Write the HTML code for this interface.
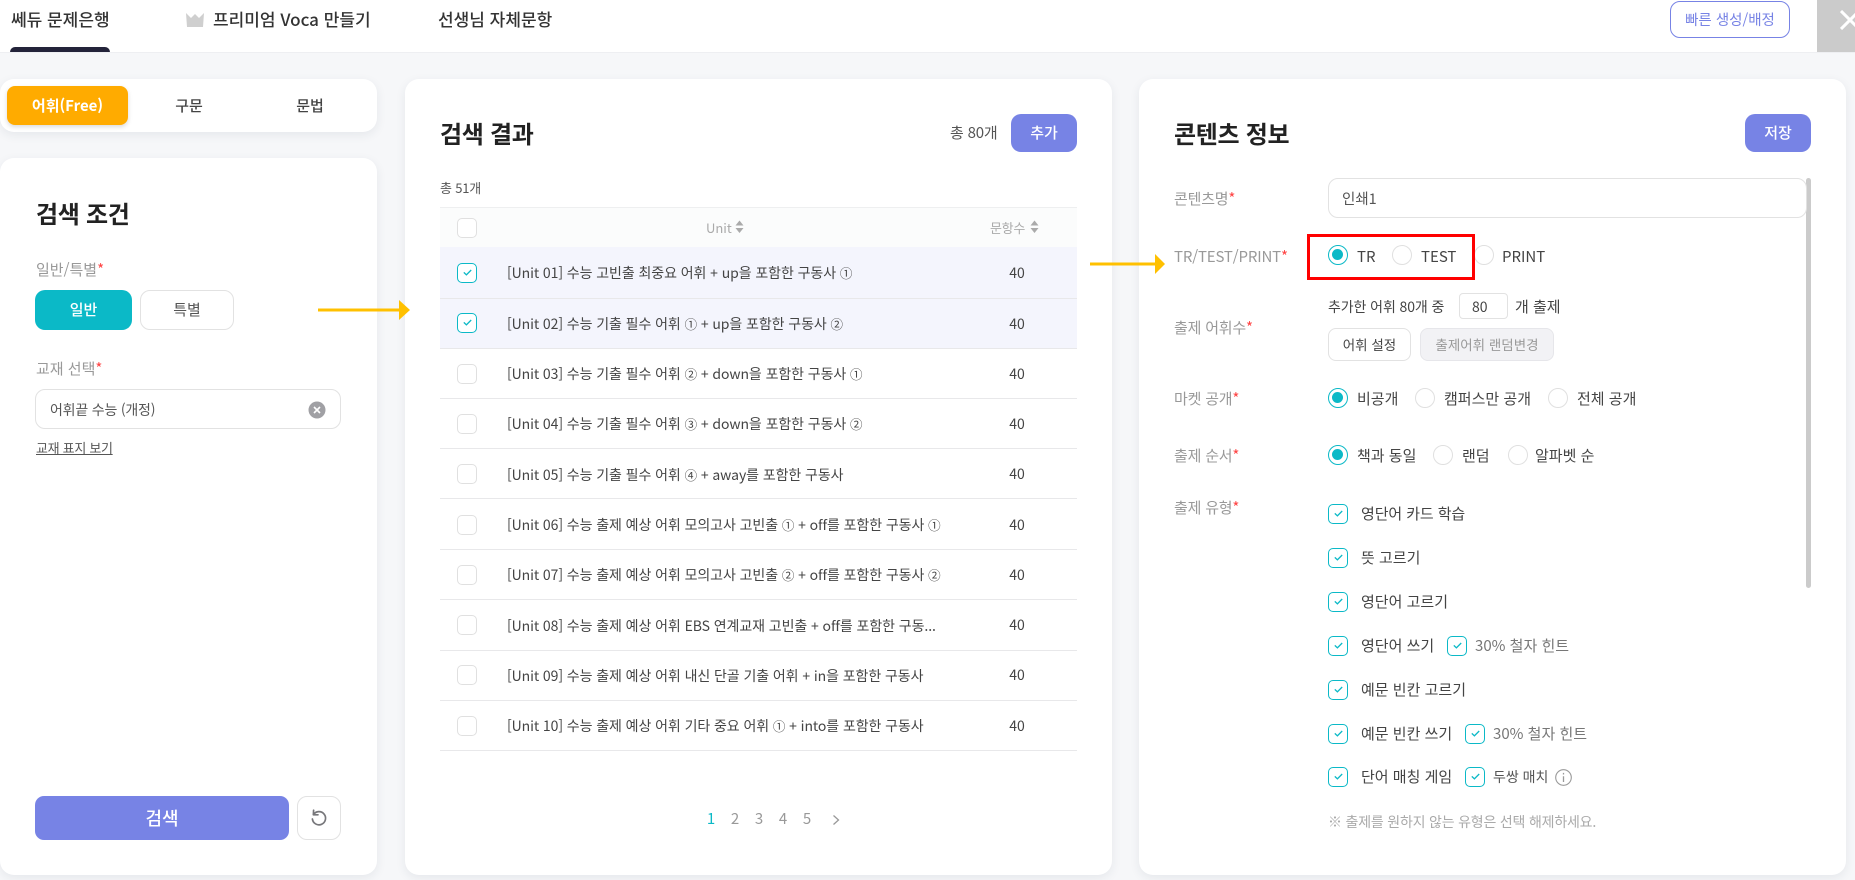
<!DOCTYPE html>
<html lang="ko">
<head>
<meta charset="utf-8">
<title>쎄듀 문제은행</title>
<style>
html,body{margin:0;padding:0;width:1855px;height:880px;overflow:hidden;background:#f6f7f9}
body{position:relative;color:#333;font-size:15px}
body,body *{font-family:"Noto Sans CJK KR","Liberation Sans",sans-serif}
.a{position:absolute;white-space:nowrap}
.t{position:absolute;white-space:nowrap;line-height:20px;height:20px}
.card{position:absolute;background:#fff;border-radius:14px;box-shadow:0 3px 10px rgba(40,50,80,.08)}
.h{font-size:24px;font-weight:700;color:#222;line-height:30px;height:30px;position:absolute;white-space:nowrap;letter-spacing:-.3px}
.lb{color:#999;font-size:15px}
.lb i{color:#f44;font-style:normal}
.btn{position:absolute;box-sizing:border-box;border-radius:10px;text-align:center;white-space:nowrap}
.pri{background:#7783e5;color:#fff;font-weight:500;font-size:15px}
.cb{position:absolute;box-sizing:border-box;width:20px;height:20px;border:1px solid #e0e0e0;border-radius:5px;background:#fff}
.cb.on{border:1.5px solid #0bb9c7}
.cb.on svg{position:absolute;left:4.5px;top:5px}
.rd{position:absolute;box-sizing:border-box;width:20px;height:20px;border:1px solid #e0e0e0;border-radius:50%;background:#fff}
.rd.on{border:1.5px solid #0bb9c7}
.rd.on:after{content:"";position:absolute;left:3px;top:3px;width:11px;height:11px;border-radius:50%;background:#0bb9c7}
.rowb{position:absolute;left:440px;width:637px;height:1px;background:#e8e8ea}
.row{position:absolute;left:507px;font-size:14px;line-height:20px;color:#444;white-space:nowrap;letter-spacing:-.08px}
.row span{font-size:12.5px}
.num{position:absolute;left:997px;width:40px;text-align:center;font-size:14px;line-height:20px;color:#444}
.pg{position:absolute;top:809px;line-height:20px;font-size:15px;color:#999;width:16px;text-align:center}
</style>
</head>
<body>

<!-- header -->
<div class="a" style="left:0;top:0;width:1855px;height:52px;background:#fff;border-bottom:1px solid #eeeff2"></div>
<div class="t" style="left:11px;top:9px;font-size:17px;font-weight:500;color:#333">쎄듀 문제은행</div>
<div class="a" style="left:10px;top:47px;width:100px;height:5px;background:#23233a;border-radius:5px 5px 0 0"></div>
<svg class="a" style="left:186px;top:13px" width="18" height="14" viewBox="0 0 18 14"><path d="M0 0 L5 5 L9 1 L13 5 L18 0 L17 14 L1 14 Z" fill="#cfcfcf"/></svg>
<div class="t" style="left:213px;top:9px;font-size:17px;font-weight:500;color:#333">프리미엄 Voca 만들기</div>
<div class="t" style="left:438px;top:9px;font-size:17px;font-weight:500;color:#333">선생님 자체문항</div>
<div class="btn" style="left:1670px;top:1px;width:120px;height:37px;border:1px solid #7783e5;background:#fff;color:#7783e5;font-size:14.5px;line-height:35px">빠른 생성/배정</div>
<div class="a" style="left:1817px;top:0;width:38px;height:52px;background:#cbcbcb;overflow:hidden">
<svg style="position:absolute;left:23px;top:10px" width="20" height="20" viewBox="0 0 20 20"><path d="M1 1 L19 19 M19 1 L1 19" stroke="#fff" stroke-width="3" fill="none"/></svg>
</div>

<!-- tabs card -->
<div class="card" style="left:0;top:79px;width:377px;height:53px"></div>
<div class="btn" style="left:7px;top:86px;width:121px;height:39px;background:#ffab00;color:#fff;font-weight:700;font-size:15px;line-height:39px;border-radius:8px;box-shadow:0 2px 5px rgba(0,0,0,.15)">어휘(Free)</div>
<div class="t" style="left:149px;top:96px;width:80px;text-align:center;font-weight:500;color:#444">구문</div>
<div class="t" style="left:270px;top:96px;width:80px;text-align:center;font-weight:500;color:#444">문법</div>

<!-- search card -->
<div class="card" style="left:0;top:158px;width:377px;height:717px"></div>
<div class="h" style="left:36px;top:198px">검색 조건</div>
<div class="t lb" style="left:36px;top:260px">일반/특별<i>*</i></div>
<div class="btn" style="left:35px;top:290px;width:97px;height:40px;background:#0bb9c7;color:#fff;line-height:40px;font-weight:500">일반</div>
<div class="btn" style="left:140px;top:290px;width:94px;height:40px;background:#fff;border:1px solid #e2e2e2;color:#555;line-height:38px">특별</div>
<div class="t lb" style="left:36px;top:359px">교재 선택<i>*</i></div>
<div class="a" style="left:35px;top:389px;width:306px;height:40px;box-sizing:border-box;border:1px solid #e2e2e2;border-radius:10px;background:#fff"></div>
<div class="t" style="left:50px;top:400px;font-size:14px;color:#555;letter-spacing:-.2px">어휘끝 수능 (개정)</div>
<svg class="a" style="left:308px;top:401px" width="18" height="18" viewBox="0 0 18 18"><circle cx="9" cy="9" r="8.5" fill="#a0a0a4"/><path d="M6 6 L12 12 M12 6 L6 12" stroke="#fff" stroke-width="1.6"/></svg>
<div class="t" style="left:36px;top:438px;font-size:13px;color:#555;text-decoration:underline;letter-spacing:-.3px">교재 표지 보기</div>
<div class="btn pri" style="left:35px;top:796px;width:254px;height:44px;line-height:44px;font-size:18px;border-radius:9px">검색</div>
<div class="btn" style="left:297px;top:796px;width:44px;height:44px;background:#fff;border:1px solid #e2e2e2"></div>
<svg class="a" style="left:309px;top:808px" width="20" height="20" viewBox="0 0 20 20"><path d="M4.5 6.5 A6.6 6.6 0 1 1 3.4 11" fill="none" stroke="#77777b" stroke-width="1.7" stroke-linecap="round"/><path d="M4.6 2.2 L4.4 6.8 L9 6.8" fill="none" stroke="#77777b" stroke-width="1.7" stroke-linecap="round" stroke-linejoin="round"/></svg>

<!-- results card -->
<div class="card" style="left:405px;top:79px;width:707px;height:796px"></div>
<div class="h" style="left:440px;top:118px">검색 결과</div>
<div class="t" style="left:950px;top:123px;font-size:15px;color:#555;letter-spacing:-.2px">총 80개</div>
<div class="btn pri" style="left:1011px;top:114px;width:66px;height:38px;line-height:38px">추가</div>
<div class="t" style="left:440px;top:178px;font-size:13px;color:#555;letter-spacing:-.2px">총 51개</div>

<div class="a" style="left:440px;top:207px;width:637px;height:40px;background:#fbfcfc;border-top:1px solid #eeeff0;box-sizing:border-box"></div>
<div class="cb" style="left:457px;top:218px"></div>
<div class="t" style="left:706px;top:218px;font-size:13px;color:#aaa">Unit</div>
<svg class="a" style="left:735px;top:220px" width="9" height="14" viewBox="0 0 9 14"><path d="M4.5 0.5 L8.5 5.5 L0.5 5.5 Z M4.5 13 L8.5 8 L0.5 8 Z" fill="#aaa"/></svg>
<div class="t" style="left:990px;top:218px;font-size:13px;color:#aaa;letter-spacing:-.3px">문항수</div>
<svg class="a" style="left:1030px;top:220px" width="9" height="14" viewBox="0 0 9 14"><path d="M4.5 0.5 L8.5 5.5 L0.5 5.5 Z M4.5 13 L8.5 8 L0.5 8 Z" fill="#aaa"/></svg>

<div class="a" style="left:440px;top:247px;width:637px;height:102px;background:#f4f5fd"></div>
<div class="rowb" style="top:298px"></div>
<div class="rowb" style="top:348px"></div>
<div class="rowb" style="top:398px"></div>
<div class="rowb" style="top:448px"></div>
<div class="rowb" style="top:498px"></div>
<div class="rowb" style="top:549px"></div>
<div class="rowb" style="top:599px"></div>
<div class="rowb" style="top:650px"></div>
<div class="rowb" style="top:700px"></div>
<div class="rowb" style="top:750px"></div>

<div class="cb on" style="left:457px;top:263px"><svg width="9" height="7" viewBox="0 0 9 7"><path d="M.8 3.4 L3.4 5.8 L8.2 1" fill="none" stroke="#0bb9c7" stroke-width="1.3"/></svg></div>
<div class="cb on" style="left:457px;top:313px"><svg width="9" height="7" viewBox="0 0 9 7"><path d="M.8 3.4 L3.4 5.8 L8.2 1" fill="none" stroke="#0bb9c7" stroke-width="1.3"/></svg></div>
<div class="cb" style="left:457px;top:364px"></div>
<div class="cb" style="left:457px;top:414px"></div>
<div class="cb" style="left:457px;top:464px"></div>
<div class="cb" style="left:457px;top:515px"></div>
<div class="cb" style="left:457px;top:565px"></div>
<div class="cb" style="left:457px;top:615px"></div>
<div class="cb" style="left:457px;top:665px"></div>
<div class="cb" style="left:457px;top:716px"></div>

<div class="row" style="top:263px">[Unit 01] 수능 고빈출 최중요 어휘 + up을 포함한 구동사 <span>①</span></div>
<div class="row" style="top:314px">[Unit 02] 수능 기출 필수 어휘 <span>①</span> + up을 포함한 구동사 <span>②</span></div>
<div class="row" style="top:364px">[Unit 03] 수능 기출 필수 어휘 <span>②</span> + down을 포함한 구동사 <span>①</span></div>
<div class="row" style="top:414px">[Unit 04] 수능 기출 필수 어휘 <span>③</span> + down을 포함한 구동사 <span>②</span></div>
<div class="row" style="top:465px">[Unit 05] 수능 기출 필수 어휘 <span>④</span> + away를 포함한 구동사</div>
<div class="row" style="top:515px">[Unit 06] 수능 출제 예상 어휘 모의고사 고빈출 <span>①</span> + off를 포함한 구동사 <span>①</span></div>
<div class="row" style="top:565px">[Unit 07] 수능 출제 예상 어휘 모의고사 고빈출 <span>②</span> + off를 포함한 구동사 <span>②</span></div>
<div class="row" style="top:616px">[Unit 08] 수능 출제 예상 어휘 EBS 연계교재 고빈출 + off를 포함한 구동...</div>
<div class="row" style="top:666px">[Unit 09] 수능 출제 예상 어휘 내신 단골 기출 어휘 + in을 포함한 구동사</div>
<div class="row" style="top:716px">[Unit 10] 수능 출제 예상 어휘 기타 중요 어휘 <span>①</span> + into를 포함한 구동사</div>

<div class="num" style="top:263px">40</div>
<div class="num" style="top:314px">40</div>
<div class="num" style="top:364px">40</div>
<div class="num" style="top:414px">40</div>
<div class="num" style="top:464px">40</div>
<div class="num" style="top:515px">40</div>
<div class="num" style="top:565px">40</div>
<div class="num" style="top:615px">40</div>
<div class="num" style="top:665px">40</div>
<div class="num" style="top:716px">40</div>

<div class="pg" style="left:703px;color:#0bb9c7">1</div>
<div class="pg" style="left:727px">2</div>
<div class="pg" style="left:751px">3</div>
<div class="pg" style="left:775px">4</div>
<div class="pg" style="left:799px">5</div>
<svg class="a" style="left:832px;top:814px" width="8" height="12" viewBox="0 0 8 12"><path d="M1.5 1.5 L6.5 6 L1.5 10.5" fill="none" stroke="#999" stroke-width="1.3"/></svg>

<!-- content card -->
<div class="card" style="left:1139px;top:79px;width:707px;height:796px"></div>
<div class="h" style="left:1174px;top:118px">콘텐츠 정보</div>
<div class="btn pri" style="left:1745px;top:114px;width:66px;height:38px;line-height:38px">저장</div>
<div class="a" style="left:1806px;top:178px;width:5px;height:410px;background:#cbcbcb;border-radius:3px"></div>

<div class="t lb" style="left:1174px;top:189px;letter-spacing:-.2px">콘텐츠명<i>*</i></div>
<div class="a" style="left:1328px;top:178px;width:479px;height:40px;box-sizing:border-box;border:1px solid #e2e2e2;border-radius:10px;background:#fff"></div>
<div class="t" style="left:1342px;top:189px;font-size:14.5px;color:#555">인쇄1</div>

<div class="t lb" style="left:1174px;top:247px;letter-spacing:-.15px">TR/TEST/PRINT<i>*</i></div>
<div class="rd on" style="left:1328px;top:245px"></div>
<div class="t" style="left:1357px;top:247px;color:#444">TR</div>
<div class="rd" style="left:1392px;top:245px"></div>
<div class="t" style="left:1421px;top:247px;color:#444">TEST</div>
<div class="rd" style="left:1474px;top:245px"></div>
<div class="t" style="left:1502px;top:247px;color:#444">PRINT</div>
<div class="a" style="left:1307px;top:234px;width:168px;height:46px;box-sizing:border-box;border:3px solid #f00"></div>

<div class="t lb" style="left:1174px;top:318px;letter-spacing:-.2px">출제 어휘수<i>*</i></div>
<div class="t" style="left:1328px;top:297px;font-size:14px;color:#444;letter-spacing:-.1px">추가한 어휘 80개 중</div>
<div class="a" style="left:1459px;top:293px;width:49px;height:26px;box-sizing:border-box;border:1px solid #e2e2e2;border-radius:4px;background:#fff"></div>
<div class="t" style="left:1472px;top:297px;font-size:14px;color:#444">80</div>
<div class="t" style="left:1515px;top:297px;color:#444">개 출제</div>
<div class="btn" style="left:1328px;top:328px;width:83px;height:33px;border:1px solid #e2e2e2;background:#fff;font-size:13.5px;line-height:31px;color:#444;border-radius:8px">어휘 설정</div>
<div class="btn" style="left:1420px;top:328px;width:134px;height:33px;border:1px solid #e6e6ea;background:#f2f2f5;font-size:13.5px;line-height:31px;color:#999;border-radius:8px">출제어휘 랜덤변경</div>

<div class="t lb" style="left:1174px;top:389px;letter-spacing:-.2px">마켓 공개<i>*</i></div>
<div class="rd on" style="left:1328px;top:388px"></div>
<div class="t" style="left:1357px;top:389px;color:#444">비공개</div>
<div class="rd" style="left:1415px;top:388px"></div>
<div class="t" style="left:1444px;top:389px;color:#444">캠퍼스만 공개</div>
<div class="rd" style="left:1548px;top:388px"></div>
<div class="t" style="left:1577px;top:389px;color:#444">전체 공개</div>

<div class="t lb" style="left:1174px;top:446px;letter-spacing:-.2px">출제 순서<i>*</i></div>
<div class="rd on" style="left:1328px;top:445px"></div>
<div class="t" style="left:1357px;top:446px;color:#444">책과 동일</div>
<div class="rd" style="left:1433px;top:445px"></div>
<div class="t" style="left:1462px;top:446px;color:#444">랜덤</div>
<div class="rd" style="left:1508px;top:445px"></div>
<div class="t" style="left:1535px;top:446px;color:#444">알파벳 순</div>

<div class="t lb" style="left:1174px;top:498px;letter-spacing:-.2px">출제 유형<i>*</i></div>

<div class="cb on" style="left:1328px;top:504px"><svg width="9" height="7" viewBox="0 0 9 7"><path d="M.8 3.4 L3.4 5.8 L8.2 1" fill="none" stroke="#0bb9c7" stroke-width="1.3"/></svg></div>
<div class="t" style="left:1361px;top:504px;color:#444;letter-spacing:-.1px">영단어 카드 학습</div>
<div class="cb on" style="left:1328px;top:548px"><svg width="9" height="7" viewBox="0 0 9 7"><path d="M.8 3.4 L3.4 5.8 L8.2 1" fill="none" stroke="#0bb9c7" stroke-width="1.3"/></svg></div>
<div class="t" style="left:1361px;top:548px;color:#444">뜻 고르기</div>
<div class="cb on" style="left:1328px;top:592px"><svg width="9" height="7" viewBox="0 0 9 7"><path d="M.8 3.4 L3.4 5.8 L8.2 1" fill="none" stroke="#0bb9c7" stroke-width="1.3"/></svg></div>
<div class="t" style="left:1361px;top:592px;color:#444">영단어 고르기</div>
<div class="cb on" style="left:1328px;top:636px"><svg width="9" height="7" viewBox="0 0 9 7"><path d="M.8 3.4 L3.4 5.8 L8.2 1" fill="none" stroke="#0bb9c7" stroke-width="1.3"/></svg></div>
<div class="t" style="left:1361px;top:636px;color:#444">영단어 쓰기</div>
<div class="cb on" style="left:1447px;top:636px"><svg width="9" height="7" viewBox="0 0 9 7"><path d="M.8 3.4 L3.4 5.8 L8.2 1" fill="none" stroke="#0bb9c7" stroke-width="1.3"/></svg></div>
<div class="t" style="left:1475px;top:636px;color:#777">30% 철자 힌트</div>
<div class="cb on" style="left:1328px;top:680px"><svg width="9" height="7" viewBox="0 0 9 7"><path d="M.8 3.4 L3.4 5.8 L8.2 1" fill="none" stroke="#0bb9c7" stroke-width="1.3"/></svg></div>
<div class="t" style="left:1361px;top:680px;color:#444">예문 빈칸 고르기</div>
<div class="cb on" style="left:1328px;top:724px"><svg width="9" height="7" viewBox="0 0 9 7"><path d="M.8 3.4 L3.4 5.8 L8.2 1" fill="none" stroke="#0bb9c7" stroke-width="1.3"/></svg></div>
<div class="t" style="left:1361px;top:724px;color:#444">예문 빈칸 쓰기</div>
<div class="cb on" style="left:1465px;top:724px"><svg width="9" height="7" viewBox="0 0 9 7"><path d="M.8 3.4 L3.4 5.8 L8.2 1" fill="none" stroke="#0bb9c7" stroke-width="1.3"/></svg></div>
<div class="t" style="left:1493px;top:724px;color:#777">30% 철자 힌트</div>
<div class="cb on" style="left:1328px;top:767px"><svg width="9" height="7" viewBox="0 0 9 7"><path d="M.8 3.4 L3.4 5.8 L8.2 1" fill="none" stroke="#0bb9c7" stroke-width="1.3"/></svg></div>
<div class="t" style="left:1361px;top:767px;color:#444">단어 매칭 게임</div>
<div class="cb on" style="left:1465px;top:767px"><svg width="9" height="7" viewBox="0 0 9 7"><path d="M.8 3.4 L3.4 5.8 L8.2 1" fill="none" stroke="#0bb9c7" stroke-width="1.3"/></svg></div>
<div class="t" style="left:1493px;top:767px;font-size:14px;color:#555">두쌍 매치</div>
<svg class="a" style="left:1555px;top:769px" width="17" height="17" viewBox="0 0 17 17"><circle cx="8.5" cy="8.5" r="7.8" fill="none" stroke="#999" stroke-width="1.1"/><path d="M8.5 7.2 V13 M8.5 3.9 V5.5" stroke="#999" stroke-width="1.3"/></svg>
<div class="t" style="left:1328px;top:812px;font-size:14px;color:#aaa;letter-spacing:-.2px">※ 출제를 원하지 않는 유형은 선택 해제하세요.</div>

<!-- arrows -->
<svg class="a" style="left:318px;top:298px" width="94" height="24" viewBox="0 0 94 24"><path d="M0 12 H84" stroke="#ffc000" stroke-width="3"/><path d="M81 2 L92 12 L81 22 Z" fill="#ffc000"/></svg>
<svg class="a" style="left:1090px;top:252px" width="76" height="24" viewBox="0 0 76 24"><path d="M0 12 H66" stroke="#ffc000" stroke-width="3"/><path d="M65 2 L75 12 L65 22 Z" fill="#ffc000"/></svg>

</body>
</html>
